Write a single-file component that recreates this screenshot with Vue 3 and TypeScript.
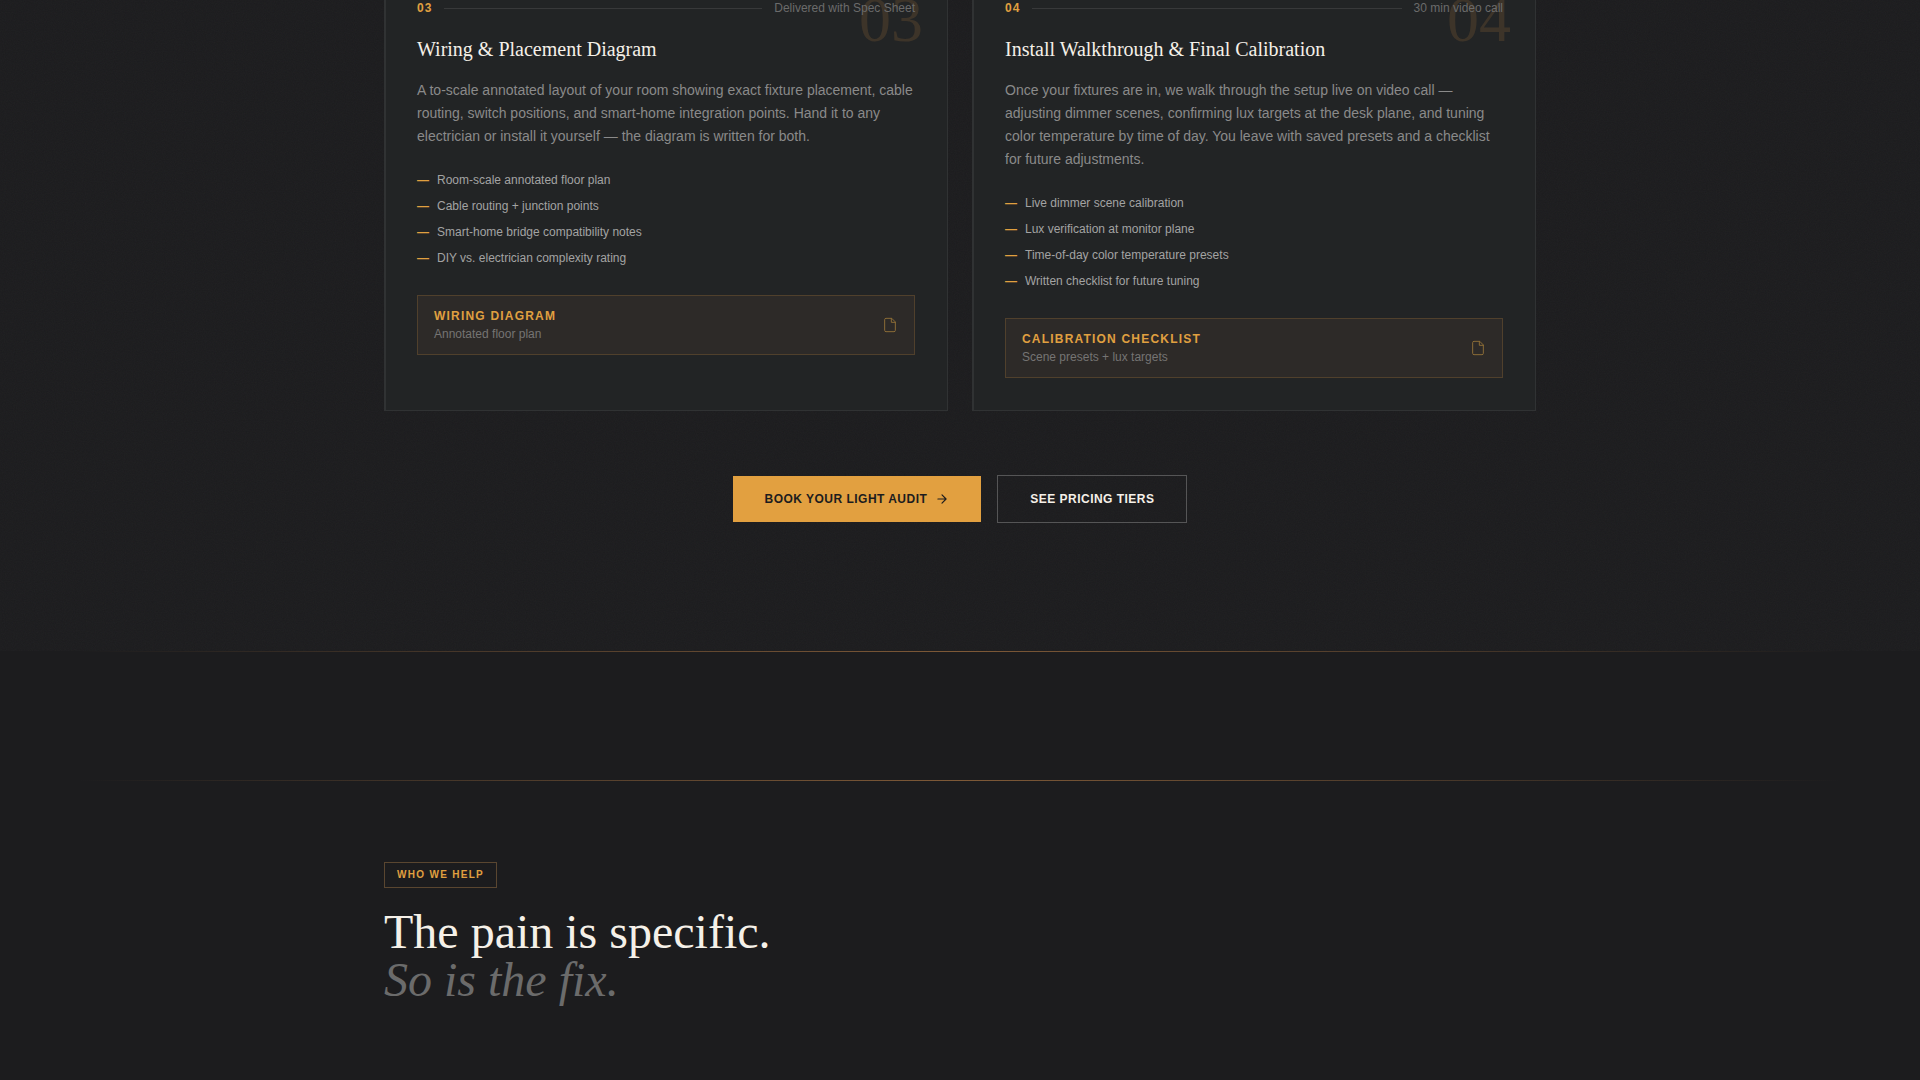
<script setup lang="ts">
interface Step {
  num: string
  meta: string
  title: string
  text: string
  items: string[]
  deliverable: string
  note: string
}

const steps: Step[] = [
  {
    num: '03',
    meta: 'Delivered with Spec Sheet',
    title: 'Wiring & Placement Diagram',
    text: 'A to-scale annotated layout of your room showing exact fixture placement, cable routing, switch positions, and smart-home integration points. Hand it to any electrician or install it yourself — the diagram is written for both.',
    items: [
      'Room-scale annotated floor plan',
      'Cable routing + junction points',
      'Smart-home bridge compatibility notes',
      'DIY vs. electrician complexity rating',
    ],
    deliverable: 'WIRING DIAGRAM',
    note: 'Annotated floor plan',
  },
  {
    num: '04',
    meta: '30 min video call',
    title: 'Install Walkthrough & Final Calibration',
    text: 'Once your fixtures are in, we walk through the setup live on video call — adjusting dimmer scenes, confirming lux targets at the desk plane, and tuning color temperature by time of day. You leave with saved presets and a checklist for future adjustments.',
    items: [
      'Live dimmer scene calibration',
      'Lux verification at monitor plane',
      'Time-of-day color temperature presets',
      'Written checklist for future tuning',
    ],
    deliverable: 'CALIBRATION CHECKLIST',
    note: 'Scene presets + lux targets',
  },
]
</script>

<template>
  <main class="page">
    <section class="process">
      <svg class="grain" aria-hidden="true">
        <filter id="grain-noise">
          <feTurbulence type="fractalNoise" baseFrequency="0.9" numOctaves="4" stitchTiles="stitch" />
        </filter>
        <rect width="100%" height="100%" filter="url(#grain-noise)" />
      </svg>
      <div class="container">
        <div class="cards">
          <article v-for="step in steps" :key="step.num" class="card">
            <span class="ghost" aria-hidden="true">{{ step.num }}</span>
            <div class="card-top">
              <span class="num">{{ step.num }}</span>
              <span class="rule"></span>
              <span class="meta">{{ step.meta }}</span>
            </div>
            <h3 class="title">{{ step.title }}</h3>
            <p class="text">{{ step.text }}</p>
            <ul class="list">
              <li v-for="item in step.items" :key="item">
                <span class="dash">—</span>
                <span>{{ item }}</span>
              </li>
            </ul>
            <div class="deliverable">
              <div>
                <div class="deliverable-name">{{ step.deliverable }}</div>
                <div class="deliverable-note">{{ step.note }}</div>
              </div>
              <svg class="file" viewBox="0 0 24 24" aria-hidden="true">
                <path d="M14 2H6a2 2 0 0 0-2 2v16a2 2 0 0 0 2 2h12a2 2 0 0 0 2-2V8z" />
                <path d="M14 2v6h6" />
              </svg>
            </div>
          </article>
        </div>
        <div class="actions">
          <button type="button" class="btn primary">
            BOOK YOUR LIGHT AUDIT
            <svg class="arrow" viewBox="0 0 24 24" aria-hidden="true">
              <path d="M5 12h14M12 5l7 7-7 7" />
            </svg>
          </button>
          <button type="button" class="btn outline">SEE PRICING TIERS</button>
        </div>
      </div>
    </section>
    <div class="divider"></div>
    <div class="spacer"></div>
    <div class="divider"></div>
    <section class="audience">
      <div class="container">
        <span class="tag">WHO WE HELP</span>
        <h2 class="headline">The pain is specific.<br /><em>So is the fix.</em></h2>
      </div>
    </section>
  </main>
</template>

<style>
body {
  margin: 0;
  background: #1c1c1e;
}
</style>

<style scoped>
.page {
  min-height: 100vh;
  overflow: hidden;
  background: #1c1c1e;
  color: #f5f0e8;
  font-family: 'Liberation Sans', Arial, sans-serif;
}
.container {
  position: relative;
  max-width: 1152px;
  margin: 0 auto;
}
.process {
  position: relative;
  padding-bottom: 128px;
}
.grain {
  position: absolute;
  inset: 0;
  width: 100%;
  height: 100%;
  opacity: 0.03;
  pointer-events: none;
}
.cards {
  display: grid;
  grid-template-columns: 1fr 1fr;
  gap: 24px;
  margin-top: -33px;
}
.card {
  position: relative;
  box-sizing: border-box;
  padding: 32px;
  border: 1px solid #303233;
  background: #222425;
  box-shadow: inset 1px 0 0 #303233;
}
.ghost {
  position: absolute;
  top: 20px;
  right: 24px;
  font-family: 'Liberation Serif', 'Times New Roman', serif;
  font-size: 64px;
  line-height: 64px;
  color: rgba(224, 150, 64, 0.15);
}
.card-top {
  position: relative;
  display: flex;
  align-items: center;
  gap: 12px;
  font-size: 12px;
  line-height: 16px;
}
.num {
  font-weight: 700;
  letter-spacing: 0.08em;
  color: #e0a040;
}
.rule {
  flex: 1;
  height: 1px;
  background: #38393a;
}
.meta {
  color: #6b6b6b;
}
.title {
  margin: 19px 0 16px;
  font-family: 'Liberation Serif', 'Times New Roman', serif;
  font-size: 20px;
  font-weight: 400;
  line-height: 28px;
}
.text {
  margin: 0 0 23px;
  font-size: 14px;
  line-height: 23px;
  color: #8a8a8a;
}
.list {
  display: flex;
  flex-direction: column;
  gap: 8px;
  margin: 0 0 28px;
  padding: 0;
  list-style: none;
  font-size: 12px;
  line-height: 18px;
  color: #a3a3a3;
}
.list li {
  display: flex;
  gap: 8px;
}
.dash {
  font-weight: 700;
  color: #e0a040;
}
.deliverable {
  display: flex;
  align-items: center;
  justify-content: space-between;
  padding: 12px 16px;
  border: 1px solid #50402c;
  background: #2d2a28;
  font-size: 12px;
  line-height: 16px;
}
.deliverable-name {
  margin-bottom: 2px;
  font-weight: 700;
  letter-spacing: 0.1em;
  color: #e0a040;
}
.deliverable-note {
  color: #757473;
}
.file {
  width: 16px;
  height: 16px;
  fill: none;
  stroke: #8b6c37;
  stroke-width: 1.5;
  stroke-linecap: round;
  stroke-linejoin: round;
}
.actions {
  display: flex;
  align-items: center;
  justify-content: center;
  gap: 16px;
  margin-top: 64px;
}
.btn {
  display: inline-flex;
  align-items: center;
  gap: 8px;
  padding: 14px 32px;
  border: 0;
  font-family: inherit;
  font-size: 12px;
  font-weight: 700;
  line-height: 18px;
  letter-spacing: 0.04em;
  cursor: pointer;
}
.primary {
  background: #e2a040;
  color: #1c1c1e;
}
.outline {
  border: 1px solid #555556;
  background: transparent;
  color: #f5f0e8;
}
.arrow {
  width: 14px;
  height: 14px;
  fill: none;
  stroke: currentColor;
  stroke-width: 2;
  stroke-linecap: round;
  stroke-linejoin: round;
}
.divider {
  height: 1px;
  background: linear-gradient(90deg, transparent 4%, rgba(224, 150, 80, 0.5) 50%, transparent 96%);
}
.spacer {
  height: 128px;
}
.audience {
  padding: 81px 0 80px;
}
.tag {
  display: block;
  width: fit-content;
  padding: 4px 12px;
  border: 1px solid #5a4630;
  font-size: 10px;
  font-weight: 700;
  line-height: 16px;
  letter-spacing: 0.13em;
  color: #e0a040;
}
.headline {
  margin: 20px 0 0;
  font-family: 'Liberation Serif', 'Times New Roman', serif;
  font-size: 48px;
  font-weight: 400;
  line-height: 48px;
}
.headline em {
  color: #6b6b6b;
}
</style>
